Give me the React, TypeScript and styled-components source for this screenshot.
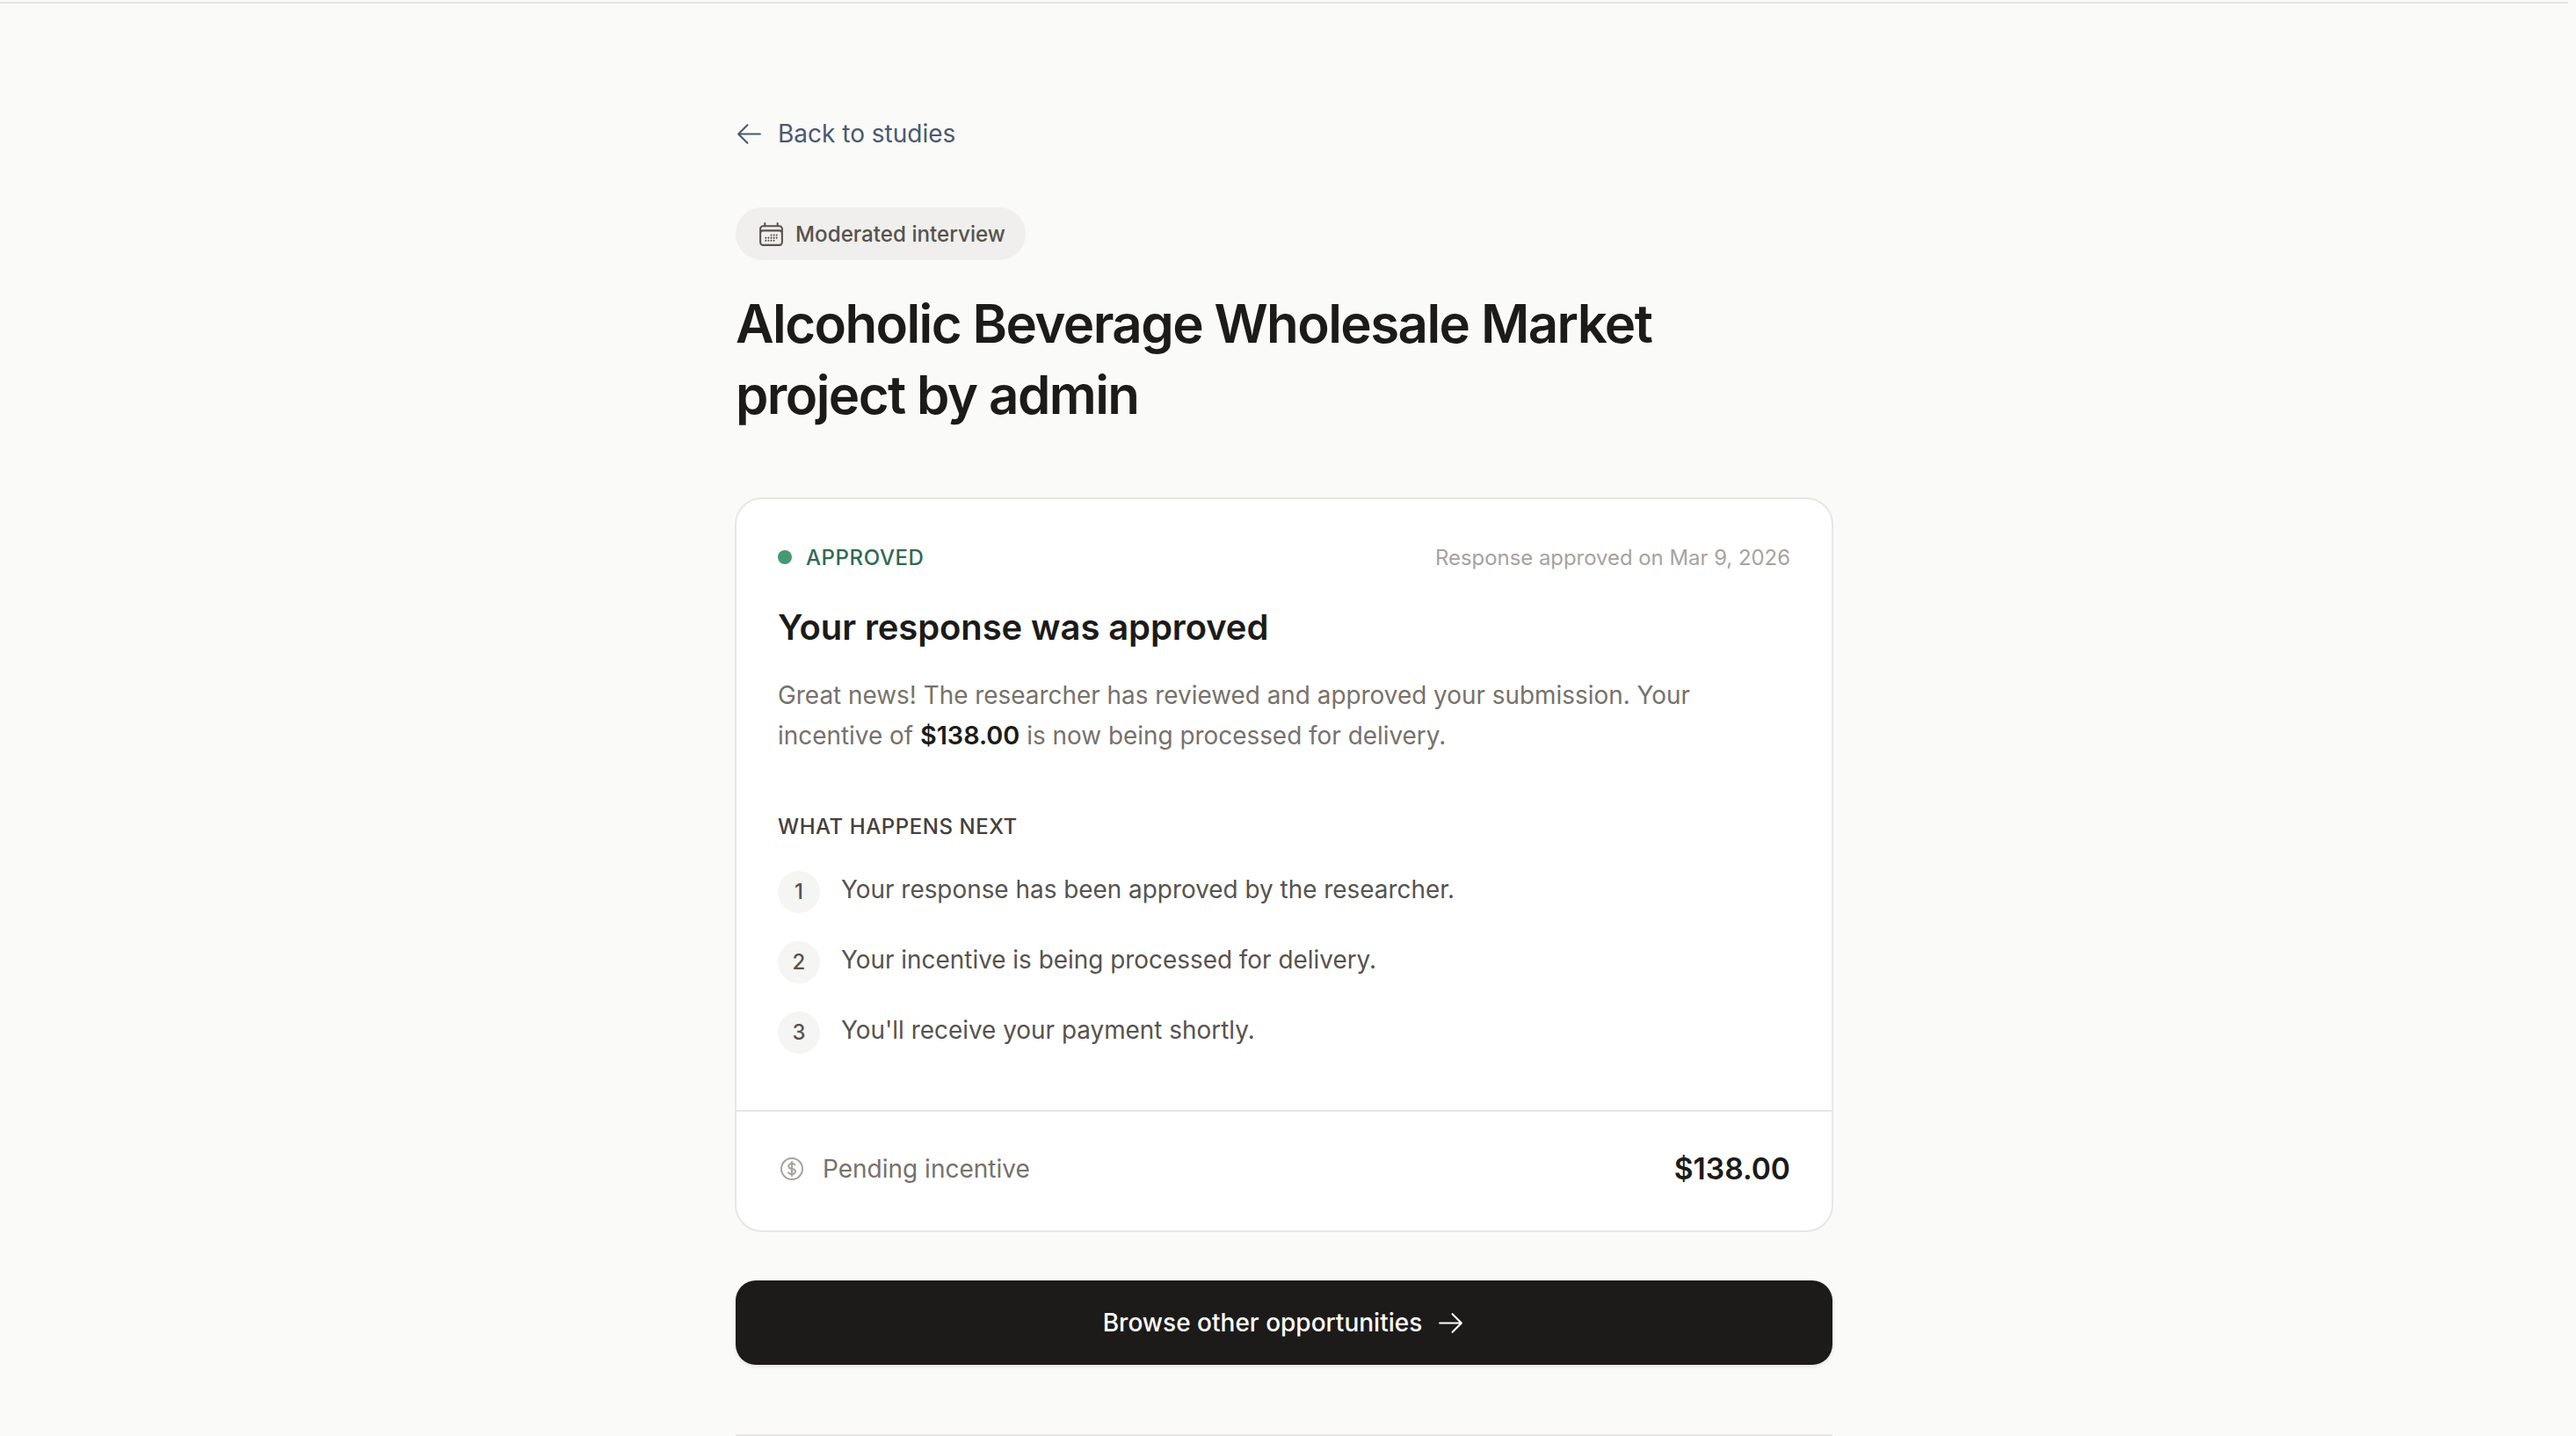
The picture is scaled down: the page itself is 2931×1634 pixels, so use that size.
import { createGlobalStyle, styled } from 'styled-components';
import {
  HiOutlineArrowLeft,
  HiOutlineArrowRight,
  HiOutlineCalendarDays,
  HiOutlineCurrencyDollar,
} from 'react-icons/hi2';

const GlobalStyle = createGlobalStyle`
  html, body {
    margin: 0;
    height: 100%;
    overflow: hidden;
    background: #fafaf8;
    font-family: Inter, "Liberation Sans", sans-serif;
    color: #1c1b19;
  }
  * { box-sizing: border-box; }
`;

const Page = styled.div`
  height: 100vh;
  overflow: hidden;
  padding-right: 9px;
`;

const TopBar = styled.div`
  height: 4px;
  border-bottom: 2px solid #e5e5e2;
`;

const Main = styled.main`
  width: 1248px;
  margin: 0 auto;
  padding-top: 130px;
`;

const BackLink = styled.a`
  display: flex;
  align-items: center;
  gap: 16px;
  height: 36px;
  font-size: 28px;
  color: #4b5872;
  margin-left: -1px;
`;

const Pill = styled.div`
  display: inline-flex;
  align-items: center;
  gap: 11px;
  height: 60px;
  margin-top: 66px;
  padding: 0 23px 0 24px;
  border-radius: 30px;
  background: #f0efed;
  font-size: 24.2px;
  font-weight: 500;
  color: #57534e;
`;

const Title = styled.h1`
  margin: 32px 0 0;
  font-size: 60px;
  line-height: 80.5px;
  font-weight: 600;
  letter-spacing: -1.6px;
  color: #1c1b19;
  max-width: 1150px;
`;

const Card = styled.section`
  margin-top: 77px;
  margin-left: -1px;
  margin-right: -1px;
  background: #fff;
  border: 2px solid #e7e6e3;
  border-radius: 31px;
  overflow: hidden;
`;

const CardBody = styled.div`
  padding: 48px 47px 64px;
`;

const StatusRow = styled.div`
  display: flex;
  align-items: center;
  justify-content: space-between;
  height: 36px;
`;

const Status = styled.div`
  display: flex;
  align-items: center;
  gap: 16px;
  font-size: 24px;
  font-weight: 500;
  letter-spacing: 0.6px;
  color: #2f6b52;
`;

const Dot = styled.span`
  width: 16px;
  height: 16px;
  border-radius: 50%;
  background: #459a72;
`;

const DateText = styled.span`
  font-size: 23.9px;
  color: #a8a29e;
`;

const CardHeading = styled.h2`
  margin: 36px 0 0;
  font-size: 40px;
  line-height: 52px;
  font-weight: 600;
  letter-spacing: -0.1px;
  color: #1c1b19;
`;

const Lead = styled.p`
  margin: 28px 0 0;
  font-size: 27.9px;
  line-height: 46px;
  color: #78716c;

  strong {
    font-size: 28.8px;
    font-weight: 600;
    color: #1c1b19;
  }
`;

const SectionLabel = styled.div`
  margin-top: 63px;
  font-size: 24px;
  line-height: 36px;
  font-weight: 500;
  letter-spacing: 0.56px;
  color: #44403c;
`;

const Steps = styled.ol`
  list-style: none;
  margin: 32px 0 0;
  padding: 0;
  display: flex;
  flex-direction: column;
  gap: 32px;
`;

const Step = styled.li`
  display: flex;
  gap: 24px;
  font-size: 27.9px;
  line-height: 42px;
  color: #57534e;
`;

const StepNumber = styled.span`
  flex: 0 0 48px;
  height: 48px;
  border-radius: 50%;
  background: #f5f5f3;
  display: flex;
  align-items: center;
  justify-content: center;
  font-size: 24px;
  font-weight: 500;
  color: #57534e;
`;

const CardFooter = styled.div`
  display: flex;
  align-items: center;
  justify-content: space-between;
  height: 137px;
  padding: 0 47px 6px;
  border-top: 2px solid #e7e6e3;
`;

const FooterLabel = styled.div`
  display: flex;
  align-items: center;
  gap: 19px;
  font-size: 28px;
  color: #78716c;

  svg {
    color: #a8a29e;
  }
`;

const FooterAmount = styled.div`
  font-size: 33.6px;
  font-weight: 600;
  color: #1c1b19;
`;

const PrimaryButton = styled.button`
  display: flex;
  align-items: center;
  justify-content: center;
  gap: 16px;
  width: 100%;
  height: 96px;
  margin-top: 55px;
  border: none;
  border-radius: 23px;
  background: #1c1b19;
  box-shadow: 0 2px 4px rgba(0, 0, 0, 0.1);
  font-family: inherit;
  font-size: 28px;
  font-weight: 500;
  color: #fff;
`;

const NextSection = styled.div`
  margin-top: 79px;
  border-top: 2px solid #e7e6e3;
`;

const App = () => {
  return (
    <Page>
      <GlobalStyle />
      <TopBar />
      <Main>
        <BackLink>
          <HiOutlineArrowLeft size={33} />
          Back to studies
        </BackLink>

        <Pill>
          <HiOutlineCalendarDays size={33} />
          Moderated interview
        </Pill>
        <Title>Alcoholic Beverage Wholesale Market project by admin</Title>

        <Card>
          <CardBody>
            <StatusRow>
              <Status>
                <Dot />
                APPROVED
              </Status>
              <DateText>Response approved on Mar 9, 2026</DateText>
            </StatusRow>
            <CardHeading>Your response was approved</CardHeading>
            <Lead>
              Great news! The researcher has reviewed and approved your submission. Your incentive
              of <strong>$138.00</strong> is now being processed for delivery.
            </Lead>

            <SectionLabel>WHAT HAPPENS NEXT</SectionLabel>
            <Steps>
              <Step>
                <StepNumber>1</StepNumber>
                Your response has been approved by the researcher.
              </Step>
              <Step>
                <StepNumber>2</StepNumber>
                Your incentive is being processed for delivery.
              </Step>
              <Step>
                <StepNumber>3</StepNumber>
                You'll receive your payment shortly.
              </Step>
            </Steps>
          </CardBody>

          <CardFooter>
            <FooterLabel>
              <HiOutlineCurrencyDollar size={32} />
              Pending incentive
            </FooterLabel>
            <FooterAmount>$138.00</FooterAmount>
          </CardFooter>
        </Card>

        <PrimaryButton>
          Browse other opportunities
          <HiOutlineArrowRight size={33} />
        </PrimaryButton>
        <NextSection />
      </Main>
    </Page>
  );
};

export default App;
